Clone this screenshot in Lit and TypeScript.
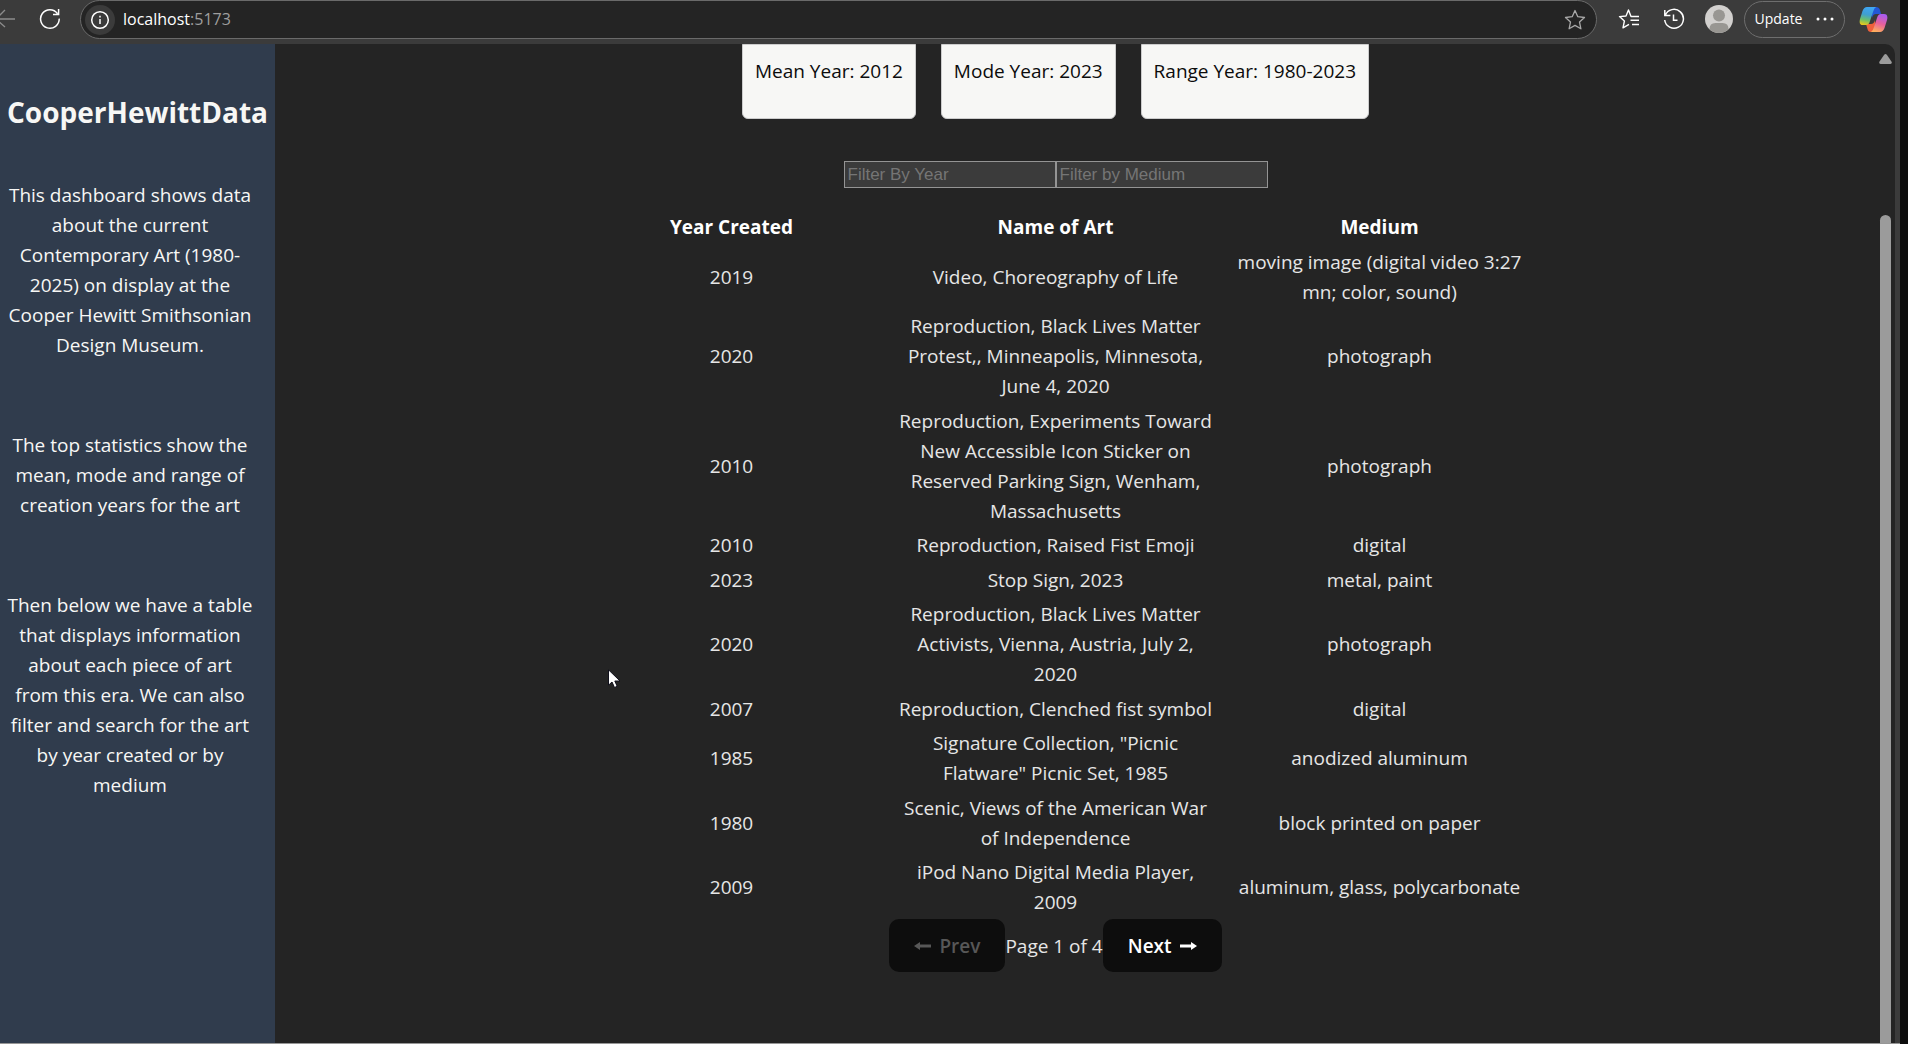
import { LitElement, html, css, svg } from "lit";
import { customElement, state } from "lit/decorators.js";

interface Artwork {
  year: string;
  name: string;
  medium: string;
}

const ARTWORKS: Artwork[] = [
  { year: "2019", name: "Video, Choreography of Life", medium: "moving image (digital video 3:27 mn; color, sound)" },
  { year: "2020", name: "Reproduction, Black Lives Matter Protest,, Minneapolis, Minnesota, June 4, 2020", medium: "photograph" },
  { year: "2010", name: "Reproduction, Experiments Toward New Accessible Icon Sticker on Reserved Parking Sign, Wenham, Massachusetts", medium: "photograph" },
  { year: "2010", name: "Reproduction, Raised Fist Emoji", medium: "digital" },
  { year: "2023", name: "Stop Sign, 2023", medium: "metal, paint" },
  { year: "2020", name: "Reproduction, Black Lives Matter Activists, Vienna, Austria, July 2, 2020", medium: "photograph" },
  { year: "2007", name: "Reproduction, Clenched fist symbol", medium: "digital" },
  { year: "1985", name: 'Signature Collection, "Picnic Flatware" Picnic Set, 1985', medium: "anodized aluminum" },
  { year: "1980", name: "Scenic, Views of the American War of Independence", medium: "block printed on paper" },
  { year: "2009", name: "iPod Nano Digital Media Player, 2009", medium: "aluminum, glass, polycarbonate" },
];

@customElement("browser-toolbar")
export class BrowserToolbar extends LitElement {
  static styles = css`
    :host {
      display: flex;
      align-items: flex-start;
      height: 44px;
      background: #3b3b3b;
      color: #ffffff;
      font-family: "Segoe UI", "Open Sans", "Noto Sans", sans-serif;
      overflow: hidden;
    }
    button {
      display: flex;
      align-items: center;
      justify-content: center;
      padding: 0;
      border: 0;
      background: none;
      color: inherit;
      font: inherit;
    }
    svg {
      display: block;
      flex: none;
    }
    .nav {
      display: flex;
      flex: none;
      width: 80px;
      height: 38px;
    }
    .back {
      width: 30px;
      justify-content: flex-start;
      color: #8c8c8c;
    }
    .reload {
      width: 40px;
    }
    .address {
      display: flex;
      flex: 1;
      align-items: center;
      box-sizing: border-box;
      height: 39px;
      padding: 0 10px 0 4px;
      border: 1px solid #6a6a6a;
      border-radius: 20px;
      background: #242424;
    }
    .info {
      width: 30px;
      height: 30px;
      border-radius: 50%;
      background: #3b3b3b;
    }
    .url {
      flex: 1;
      padding: 0 0 2px 8px;
      font-size: 16px;
      line-height: 24px;
      outline: none;
    }
    .port {
      color: #9e9e9e;
    }
    .star {
      color: #a8a8a8;
    }
    .tools {
      display: flex;
      flex: none;
      align-items: center;
      height: 38px;
      padding: 0 12px 0 21px;
    }
    .tool {
      width: 22px;
      margin-right: 23px;
    }
    .avatar {
      margin: 0 11px 0 -3px;
    }
    .update {
      box-sizing: border-box;
      width: 101px;
      height: 37px;
      gap: 14px;
      border: 1px solid #6e6e6e;
      border-radius: 19px;
      font-size: 14px;
      margin-right: 14px;
    }
  `;

  render() {
    return html`
      <div class="nav">
        <button class="back" aria-label="Back">
          <svg width="16" height="20" viewBox="0 0 16 20" fill="none" stroke="currentColor" stroke-width="1.3">
            <path d="M15 10H-2M5 1L-4 10L5 18" />
          </svg>
        </button>
        <button class="reload" aria-label="Reload">
          <svg width="22" height="22" viewBox="0 0 22 22" fill="none" stroke="currentColor" stroke-width="1.5">
            <path d="M20.2 10.6A9.3 9.3 0 1 1 18.5 5.6M19.6 1V6.6H14" />
          </svg>
        </button>
      </div>
      <div class="address">
        <button class="info" aria-label="Site information">
          <svg width="20" height="20" viewBox="0 0 20 20" fill="none" stroke="currentColor" stroke-width="1.5">
            <circle cx="10" cy="10" r="8.3" />
            <path d="M10 9V14M10 5.8V7.4" />
          </svg>
        </button>
        <div class="url" role="textbox" aria-label="Address" contenteditable="true" spellcheck="false">localhost<span class="port">:5173</span></div>
        <button class="star" aria-label="Add to favorites">
          <svg width="22" height="22" viewBox="0 0 22 22" fill="none" stroke="currentColor" stroke-width="1.3" stroke-linejoin="round">
            <path d="M11 1.5L13.8 7.7L20.5 8.5L15.5 13L16.9 19.8L11 16.4L5.1 19.8L6.500 13L1.500 8.500L8.200 7.700Z" />
          </svg>
        </button>
      </div>
      <div class="tools">
        <button class="tool" aria-label="Favorites">
          <svg width="22" height="22" viewBox="0 0 22 22" fill="none" stroke="currentColor" stroke-width="1.4" stroke-linejoin="round">
            <path d="M21 8.5H13L10.5 2L8 8L1.5 8.6L6.4 13L5 19.8L11 16.4M12.5 12.3H21M14 16.5H21" />
          </svg>
        </button>
        <button class="tool" aria-label="History">
          <svg width="22" height="22" viewBox="0 0 22 22" fill="none" stroke="currentColor" stroke-width="1.5">
            <path d="M2.3 7.3A9.4 9.4 0 1 1 1.7 12M1.8 2V7.6H7.4M10.5 6.5V12.3H14.5" />
          </svg>
        </button>
        <button class="avatar" aria-label="Profile">
          <svg width="28" height="28" viewBox="0 0 28 28">
            <clipPath id="face"><circle cx="14" cy="14" r="14" /></clipPath>
            <g clip-path="url(#face)">
              <rect width="28" height="28" fill="#d2d0ce" />
              <circle cx="14" cy="10.5" r="6" fill="#989692" />
              <path d="M4.5 28V24Q4.5 18 10.5 18H17.5Q23.5 18 23.5 24V28Z" fill="#989692" />
            </g>
          </svg>
        </button>
        <button class="update">
          Update
          <svg width="18" height="4" viewBox="0 0 18 4" fill="currentColor">
            <circle cx="2" cy="2" r="1.5" />
            <circle cx="9" cy="2" r="1.5" />
            <circle cx="16" cy="2" r="1.5" />
          </svg>
        </button>
        <button aria-label="Copilot">
          <svg width="29" height="27" viewBox="0 0 29 27">
            <defs>
              <linearGradient id="cool" x1="0.4" y1="0" x2="0.2" y2="1">
                <stop offset="0" stop-color="#3fa5f2" />
                <stop offset="0.4" stop-color="#3f9fd0" />
                <stop offset="0.7" stop-color="#6cc06a" />
                <stop offset="1" stop-color="#f2c916" />
              </linearGradient>
              <linearGradient id="warm" x1="0.6" y1="0" x2="0.3" y2="1">
                <stop offset="0" stop-color="#a95cf0" />
                <stop offset="0.5" stop-color="#e8609c" />
                <stop offset="1" stop-color="#ffb05c" />
              </linearGradient>
            </defs>
            <path d="M12 1H17Q20 1 21 4L22 8H17Q14 8 13 12Z" fill="#2358d6" />
            <path d="M17 26H12Q9 26 8.5 23L7 18H12Q15 18 16 14Z" fill="#f0603c" />
            <path d="M8 1H17Q15 2 14 6L11 15Q10 19 7 19H4Q-0.5 19 1 13L3.5 5Q5 1 8 1Z" fill="url(#cool)" />
            <path d="M21 26H12Q14 25 15 21L18 12Q19 8 22 8H25Q29.5 8 28 14L25.5 22Q24 26 21 26Z" fill="url(#warm)" />
          </svg>
        </button>
      </div>
    `;
  }
}

@customElement("app-root")
export class AppRoot extends LitElement {
  @state() private yearFilter = "";
  @state() private mediumFilter = "";

  static styles = css`
    :host {
      display: flex;
      flex-direction: column;
      box-sizing: border-box;
      height: 100vh;
      position: relative;
      overflow: hidden;
      background: #3b3b3b;
      color: #e6e6e6;
      font-family: "Segoe UI", "Open Sans", "Noto Sans", sans-serif;
      font-size: 19px;
      line-height: 30px;
    }
    .window {
      display: flex;
      flex: 1;
      min-height: 0;
    }
    .frame {
      display: flex;
      flex: 1;
      flex-direction: column;
      min-width: 0;
    }
    .edge {
      width: 8px;
      background: #0c0c0c;
    }
    .viewport {
      display: flex;
      flex: 1;
      min-height: 0;
      margin-right: 5px;
      border-radius: 0 10px 0 0;
      background: #242424;
      overflow: hidden;
    }
    .bottom-line {
      height: 1px;
      background: #969696;
    }
    .sidebar {
      flex: none;
      box-sizing: border-box;
      width: 275px;
      padding: 48px 5px 0;
      background: #303c4d;
      color: #f7f7f5;
      text-align: center;
    }
    .title {
      margin: 0 0 48px;
      font-size: 28px;
      line-height: 40px;
      font-weight: 700;
      white-space: nowrap;
    }
    .note {
      width: 250px;
      margin: 0 0 70px;
    }
    .content {
      display: flex;
      flex: 1;
      flex-direction: column;
      align-items: center;
      padding-right: 40px;
    }
    .stats {
      display: flex;
      gap: 25px;
    }
    .card {
      padding: 11px 12px 32px;
      border: 1px solid #cccccc;
      border-radius: 0 0 6px 6px;
      background: #f7f7f5;
      color: #0c0c0c;
    }
    .card p {
      margin: 0;
    }
    .filters {
      display: flex;
      margin: 42px 0 21px;
    }
    .filter {
      box-sizing: border-box;
      width: 212px;
      height: 27px;
      padding: 1px 3px;
      border: 1px solid #949494;
      border-radius: 0;
      background: #3b3b3b;
      color: #ffffff;
      font-family: "Liberation Sans", Arial, sans-serif;
      font-size: 17px;
    }
    .filter::placeholder {
      color: #757575;
    }
    .art {
      width: 972px;
      max-width: 100%;
      border-collapse: collapse;
      table-layout: fixed;
      text-align: center;
    }
    .art th,
    .art td {
      padding: 3px 1px 1px;
      vertical-align: middle;
    }
    .art th,
    .art tbody tr:nth-child(even) td {
      padding-bottom: 2px;
    }
    .art th {
      color: #ffffff;
      font-weight: 700;
    }
    .pager {
      display: flex;
      align-items: center;
    }
    .page-button {
      display: flex;
      align-items: center;
      gap: 8px;
      height: 53px;
      padding: 0 25px;
      border: 0;
      border-radius: 10px;
      background: #0d0d0d;
      color: #ffffff;
      font-family: inherit;
      font-size: 19px;
      line-height: 30px;
      font-weight: 600;
    }
    .page-button:disabled {
      color: #575757;
    }
    .scrollbar {
      display: flex;
      flex: none;
      flex-direction: column;
      align-items: center;
      width: 19px;
      padding-top: 10px;
    }
    .thumb {
      flex: 1;
      width: 11px;
      margin-top: 151px;
      border-radius: 6px 6px 0 0;
      background: #9b9b9b;
    }
    .pointer {
      position: absolute;
      left: 608px;
      top: 669px;
    }
    svg {
      display: block;
    }
  `;

  private arrow(direction: "left" | "right") {
    const shape =
      direction === "left"
        ? svg`<path d="M0 5L6 1V3.5H17V6.5H6V9Z" />`
        : svg`<path d="M17 5L11 1V3.5H0V6.5H11V9Z" />`;
    return html`<svg width="17" height="10" viewBox="0 0 17 10" fill="currentColor" aria-hidden="true">${shape}</svg>`;
  }

  private get rows() {
    const medium = this.mediumFilter.toLowerCase();
    return ARTWORKS.filter((a) => a.year.includes(this.yearFilter) && a.medium.toLowerCase().includes(medium));
  }

  render() {
    return html`
      <div class="window">
        <div class="frame">
          <browser-toolbar></browser-toolbar>
          <div class="viewport">
            <aside class="sidebar">
              <h1 class="title">CooperHewittData</h1>
              <p class="note">
                This dashboard shows data about the current Contemporary Art (1980-2025) on display at the Cooper Hewitt
                Smithsonian Design Museum.
              </p>
              <p class="note">The top statistics show the mean, mode and range of creation years for the art</p>
              <p class="note">
                Then below we have a table that displays information about each piece of art from this era. We can also
                filter and search for the art by year created or by medium
              </p>
            </aside>
            <main class="content">
              <div class="stats">
                <div class="card"><p>Mean Year: 2012</p></div>
                <div class="card"><p>Mode Year: 2023</p></div>
                <div class="card"><p>Range Year: 1980-2023</p></div>
              </div>
              <div class="filters">
                <input
                  class="filter"
                  type="text"
                  aria-label="Filter By Year"
                  placeholder="Filter By Year"
                  @input=${(e: Event) => (this.yearFilter = (e.target as HTMLInputElement).value)}
                />
                <input
                  class="filter"
                  type="text"
                  aria-label="Filter by Medium"
                  placeholder="Filter by Medium"
                  @input=${(e: Event) => (this.mediumFilter = (e.target as HTMLInputElement).value)}
                />
              </div>
              <table class="art">
                <thead>
                  <tr>
                    <th scope="col">Year Created</th>
                    <th scope="col">Name of Art</th>
                    <th scope="col">Medium</th>
                  </tr>
                </thead>
                <tbody>
                  ${this.rows.map(
                    (a) => html`<tr>
                      <td>${a.year}</td>
                      <td>${a.name}</td>
                      <td>${a.medium}</td>
                    </tr>`
                  )}
                </tbody>
              </table>
              <nav class="pager" aria-label="Pages">
                <button class="page-button" disabled>${this.arrow("left")}Prev</button>
                <span>Page 1 of 4</span>
                <button class="page-button">Next${this.arrow("right")}</button>
              </nav>
            </main>
            <div class="scrollbar">
              <svg width="13" height="10" viewBox="0 0 13 10" fill="#9b9b9b">
                <path d="M5 1Q6.5 -0.8 8 1L12.6 7.8Q13.3 10 11.5 10H1.5Q-0.3 10 0.4 7.8Z" />
              </svg>
              <div class="thumb"></div>
            </div>
          </div>
          <div class="bottom-line"></div>
        </div>
        <div class="edge"></div>
      </div>
      <svg class="pointer" width="13" height="20" viewBox="0 0 13 20" aria-hidden="true">
        <path d="M0.5 0.8V16.2L4 13L6.5 18.5L9.2 17.3L6.8 12H12Z" fill="#ffffff" stroke="#10101c" />
      </svg>
    `;
  }
}
